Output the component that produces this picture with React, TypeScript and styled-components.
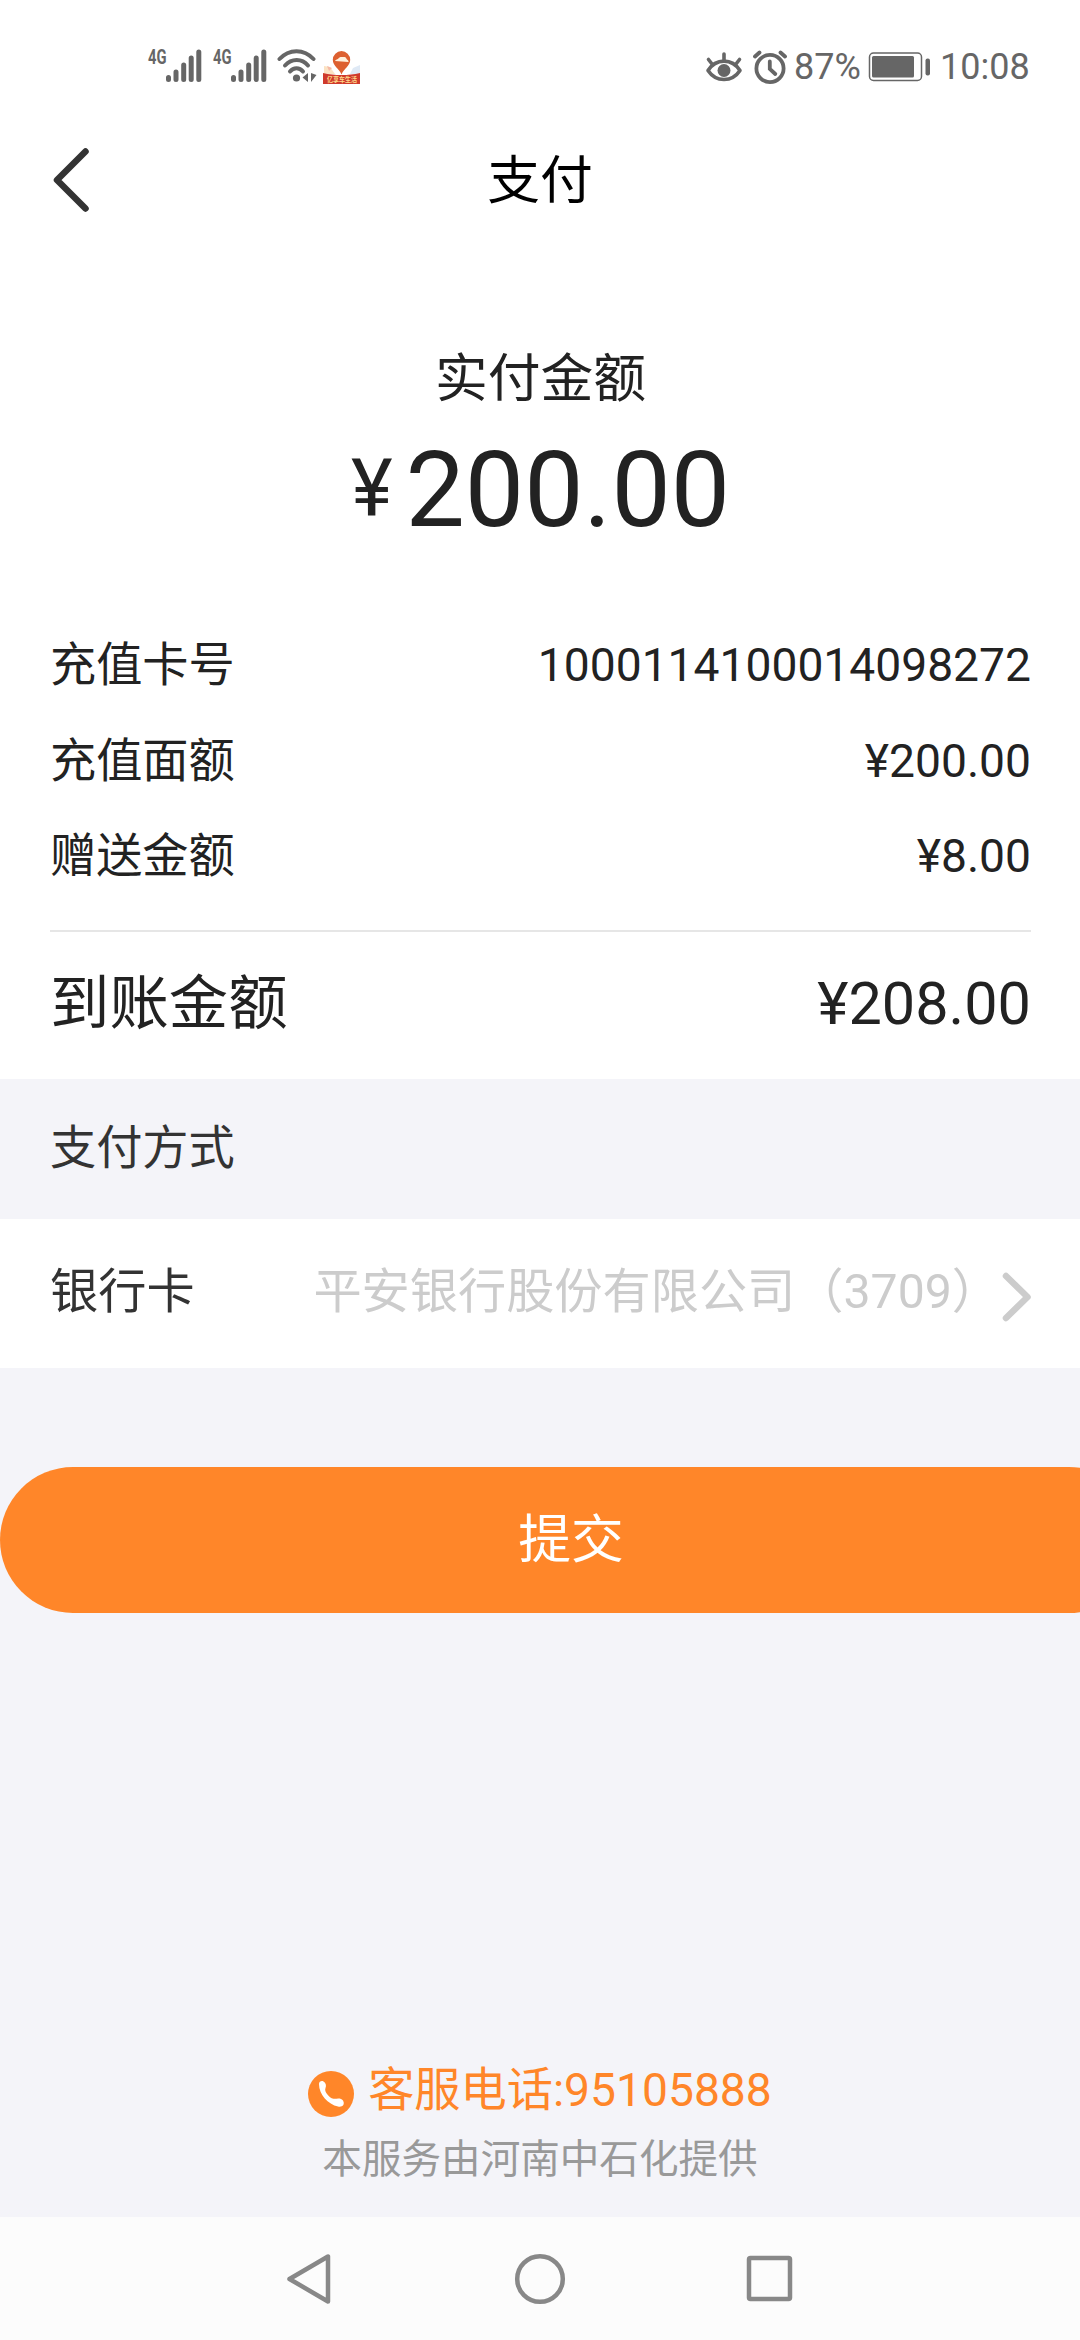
import React from "react";
import styled, { createGlobalStyle } from "styled-components";

const GlobalStyle = createGlobalStyle`
  * {
    box-sizing: border-box;
  }
  body {
    margin: 0;
    background: #f4f4f9;
    font-family: Roboto, "Noto Sans CJK SC", sans-serif;
    color: #222;
    overflow: hidden;
  }
  svg {
    display: block;
    flex-shrink: 0;
  }
`;

const Screen = styled.div`
  width: 1080px;
  height: 2340px;
  display: flex;
  flex-direction: column;
  background: #f4f4f9;
  overflow: hidden;
`;

const StatusBar = styled.div`
  height: 108px;
  padding: 28px 50px 0 147px;
  display: flex;
  justify-content: space-between;
  background: #fff;
`;

const StatusGroup = styled.div`
  height: 78px;
  display: flex;
  align-items: center;
`;

const StatusItem = styled.span<{ $gap: number }>`
  margin-right: ${(p) => p.$gap}px;
`;

const StatusText = styled.span<{ $width: number }>`
  width: ${(p) => p.$width}px;
  font-size: 36px;
  line-height: 80px;
  color: #666;
  white-space: nowrap;
`;

const Header = styled.header`
  height: 146px;
  padding: 0 50px;
  display: grid;
  grid-template-columns: 100px 1fr 100px;
  align-items: center;
  background: #fff;
`;

const BackButton = styled.button`
  border: 0;
  padding: 0 0 3px;
  background: none;
`;

const Title = styled.h1`
  margin: 0;
  font-size: 52.8px;
  font-weight: 400;
  line-height: 146px;
  text-align: center;
  color: #000;
`;

const Summary = styled.section`
  height: 825px;
  padding: 90px 49px 0 50px;
  background: #fff;
`;

const AmountLabel = styled.div`
  font-size: 52.8px;
  line-height: 70px;
  text-align: center;
`;

const Amount = styled.div`
  display: flex;
  justify-content: center;
  margin: 14px 0 66px;
  font-size: 105.6px;
  line-height: 124px;
`;

const Currency = styled.span`
  margin-right: 13px;
  font-size: 79.2px;
  line-height: 122px;
`;

const DetailRow = styled.div<{ $total?: boolean }>`
  display: flex;
  justify-content: space-between;
  font-size: ${(p) => (p.$total ? 59.4 : 46.2)}px;
  line-height: ${(p) => (p.$total ? 144 : 95.5)}px;
`;

const Divider = styled.div`
  height: 2px;
  margin-top: 25px;
  background: #e6e6e6;
`;

const SectionTitle = styled.h2`
  margin: 0;
  padding: 0 50px 2px;
  font-size: 46.2px;
  font-weight: 400;
  line-height: 138px;
  color: #333;
`;

const BankRow = styled.div`
  height: 149px;
  padding: 0 49px 4px 50px;
  display: flex;
  align-items: center;
  font-size: 48.2px;
  line-height: 145px;
  color: #333;
  background: #fff;
`;

const BankName = styled.span`
  flex: 1;
  padding-right: 2px;
  text-align: right;
  color: #ccc;
  white-space: nowrap;
`;

const ArrowBox = styled.span`
  padding-top: 11px;
`;

// wider than the screen, the right end runs off the edge
const SubmitButton = styled.button`
  width: 1142px;
  height: 146px;
  flex-shrink: 0;
  margin-top: 99px;
  padding: 0;
  border: 0;
  border-radius: 73px;
  background: #ff8629;
  color: #fff;
  font-family: inherit;
  font-size: 52.8px;
  line-height: 146px;
`;

const Footer = styled.footer`
  margin-top: auto;
  padding-bottom: 23px;
  text-align: center;
`;

const Hotline = styled.div`
  display: flex;
  align-items: center;
  justify-content: center;
  gap: 14px;
  font-size: 46.2px;
  line-height: 72px;
  color: #ff8629;
`;

const HotlineIcon = styled.span`
  padding-top: 8px;
`;

const Provider = styled.div`
  font-size: 39.6px;
  line-height: 68px;
  color: #999;
`;

const NavBar = styled.nav`
  height: 123px;
  display: flex;
  align-items: center;
  justify-content: center;
  gap: 176px;
  background: #fcfcfc;
`;

const GREY = "#666";

const SignalIcon: React.FC = () => (
  <svg width="65" height="56" viewBox="0 -8 65 56">
    <text
      x="1"
      y="16.5"
      fontFamily="Roboto"
      fontSize="20"
      fontWeight="700"
      fill={GREY}
      textLength="18.5"
      lengthAdjust="spacingAndGlyphs"
    >
      4G
    </text>
    <g stroke={GREY} strokeWidth="5" strokeLinecap="round">
      <path d="M21.500 32.500v-2M29 32.500V25M36.700 32.500V18M44.200 32.500V11M51.800 32.500V5" />
    </g>
  </svg>
);

const WifiIcon: React.FC = () => (
  <svg width="40" height="40" viewBox="0 0 40 40">
    <g fill="none" stroke={GREY} strokeWidth="4" strokeLinecap="round">
      <path d="M2.500 12C12 1.500 27 1.500 36.500 12" />
      <path d="M8 18.500C14.500 11 25 11 31 18.500" />
      <path d="M13 24.500C16.500 20 22.500 20 26 24.500" />
    </g>
    <circle cx="19.500" cy="31" r="3.600" fill={GREY} />
    <path d="M31 26v9l-5.500-4.500zM34 26v9l5.500-7z" fill={GREY} />
  </svg>
);

const PromoIcon: React.FC = () => (
  <svg width="38" height="36" viewBox="0 0 38 36">
    <path d="M1 17l6 1 5 7H1z" fill="#fbe3c4" />
    <path d="M37 16l-7 3-3 6h10z" fill="#dfe9f5" />
    <path d="M4 17l5 2-3 3z" fill="#f5b9a5" />
    <path d="M0 24c6 1.500 12 2 18.500 2S31 25.500 37 24v11H0z" fill="#cf3a2c" />
    <path
      d="M18.500 25.500C16 19.500 9.800 17 9.800 10.800a8.700 8.700 0 0 1 17.400 0C27.200 17 21 19.500 18.500 25.500z"
      fill="#dd6030"
    />
    <path
      d="M12 12c.5-1.500 2-1.500 3-2 1-1.500 2-2 3.500-2h3c1.500 0 1.800 1.500 2.500 2.500 1 .5 1.500 1 1.500 2.500z"
      fill="#fff0dc"
    />
    <text
      x="4"
      y="33"
      fontFamily="Noto Sans CJK SC"
      fontSize="7"
      fontWeight="700"
      fill="#ffd98a"
      textLength="30"
      lengthAdjust="spacingAndGlyphs"
    >
      亿享车生活
    </text>
  </svg>
);

const EyeIcon: React.FC = () => (
  <svg width="38" height="36" viewBox="0 0 38 36">
    <g fill="none" stroke={GREY} strokeWidth="3.600" strokeLinecap="round">
      <path
        d="M3 21.500C11 9 27 9 35 21.500C27 33.500 11 33.500 3 21.500z"
        strokeLinejoin="round"
      />
      <path d="M19 5V11M3.500 10.500l3.500 4.500M34.500 10.500l-3.500 4.500" />
    </g>
    <circle cx="19" cy="21.500" r="6.500" fill={GREY} />
  </svg>
);

const AlarmIcon: React.FC = () => (
  <svg width="36" height="36" viewBox="0 0 36 36">
    <g fill="none" stroke={GREY} strokeWidth="3.800" strokeLinecap="round">
      <circle cx="18" cy="19.500" r="13.600" />
      <path d="M17.800 12.500v7.500l5.500 5" />
      <path d="M3 7.500l4.500-4M33 7.500l-4.500-4" />
    </g>
  </svg>
);

const BatteryIcon: React.FC = () => (
  <svg width="62" height="32" viewBox="0 0 62 32">
    <rect
      x="1.500"
      y="2"
      width="52"
      height="27.500"
      rx="4"
      fill="none"
      stroke={GREY}
      strokeWidth="1.500"
    />
    <rect x="4" y="5" width="42" height="21.500" rx="1.500" fill={GREY} />
    <rect x="57.500" y="7.500" width="4.500" height="17" rx="2" fill={GREY} />
  </svg>
);

const PhoneIcon: React.FC = () => (
  <svg width="46" height="46" viewBox="0 0 46 46">
    <circle cx="23" cy="23" r="23" fill="#ff8629" />
    <path
      d="M11 13c0-2.500 2.500-3.500 4.500-2.500 2.500 1.500 3 4 2 6.500-.8 2 0 4 1.500 6 2 2.500 4 4.500 6.500 4.800 2.500.2 5-.8 7.500.2 2.500 1 3.500 4 2.300 6-1 1.500-3 2-5.300 1.500C20 33.500 11 23.500 11 13z"
      fill="#fff"
    />
  </svg>
);

const details = [
  { label: "充值卡号", value: "1000114100014098272" },
  { label: "充值面额", value: "¥200.00" },
  { label: "赠送金额", value: "¥8.00" },
];

const App: React.FC = () => {
  return (
    <>
      <GlobalStyle />
      <Screen>
        <StatusBar>
          <StatusGroup>
            <SignalIcon />
            <SignalIcon />
            <StatusItem $gap={6}>
              <WifiIcon />
            </StatusItem>
            <PromoIcon />
          </StatusGroup>
          <StatusGroup>
            <StatusItem $gap={9}>
              <EyeIcon />
            </StatusItem>
            <StatusItem $gap={6}>
              <AlarmIcon />
            </StatusItem>
            <StatusText $width={74}>87%</StatusText>
            <StatusItem $gap={10}>
              <BatteryIcon />
            </StatusItem>
            <StatusText $width={90}>10:08</StatusText>
          </StatusGroup>
        </StatusBar>

        <Header>
          <BackButton>
            <svg width="42" height="66" viewBox="0 0 42 66">
              <path
                d="M35.500 4.500L7 33l28.500 28.500"
                fill="none"
                stroke="#333"
                strokeWidth="6.500"
                strokeLinecap="round"
                strokeLinejoin="round"
              />
            </svg>
          </BackButton>
          <Title>支付</Title>
        </Header>

        <Summary>
          <AmountLabel>实付金额</AmountLabel>
          <Amount>
            <Currency>¥</Currency>
            <span>200.00</span>
          </Amount>
          {details.map((item) => (
            <DetailRow key={item.label}>
              <span>{item.label}</span>
              <span>{item.value}</span>
            </DetailRow>
          ))}
          <Divider />
          <DetailRow $total>
            <span>到账金额</span>
            <span>¥208.00</span>
          </DetailRow>
        </Summary>

        <SectionTitle>支付方式</SectionTitle>
        <BankRow>
          <span>银行卡</span>
          <BankName>平安银行股份有限公司（3709）</BankName>
          <ArrowBox>
            <svg width="29" height="50" viewBox="0 0 29 50">
              <path
                d="M4 4l21.500 21L4 46"
                fill="none"
                stroke="#ccc"
                strokeWidth="6.500"
                strokeLinecap="round"
                strokeLinejoin="round"
              />
            </svg>
          </ArrowBox>
        </BankRow>

        <SubmitButton>提交</SubmitButton>

        <Footer>
          <Hotline>
            <HotlineIcon>
              <PhoneIcon />
            </HotlineIcon>
            <span>客服电话:95105888</span>
          </Hotline>
          <Provider>本服务由河南中石化提供</Provider>
        </Footer>

        <NavBar>
          <svg width="54" height="54" viewBox="0 0 54 54">
            <path
              d="M45 4.500v45L6.500 27z"
              fill="none"
              stroke="#888"
              strokeWidth="4.500"
              strokeLinejoin="round"
            />
          </svg>
          <svg width="54" height="54" viewBox="0 0 54 54">
            <circle cx="27" cy="27" r="22.800" fill="none" stroke="#888" strokeWidth="4.500" />
          </svg>
          <svg width="54" height="54" viewBox="0 0 54 54">
            <rect
              x="6"
              y="6"
              width="41"
              height="41"
              rx="1.500"
              fill="none"
              stroke="#888"
              strokeWidth="4.500"
            />
          </svg>
        </NavBar>
      </Screen>
    </>
  );
};

export default App;
